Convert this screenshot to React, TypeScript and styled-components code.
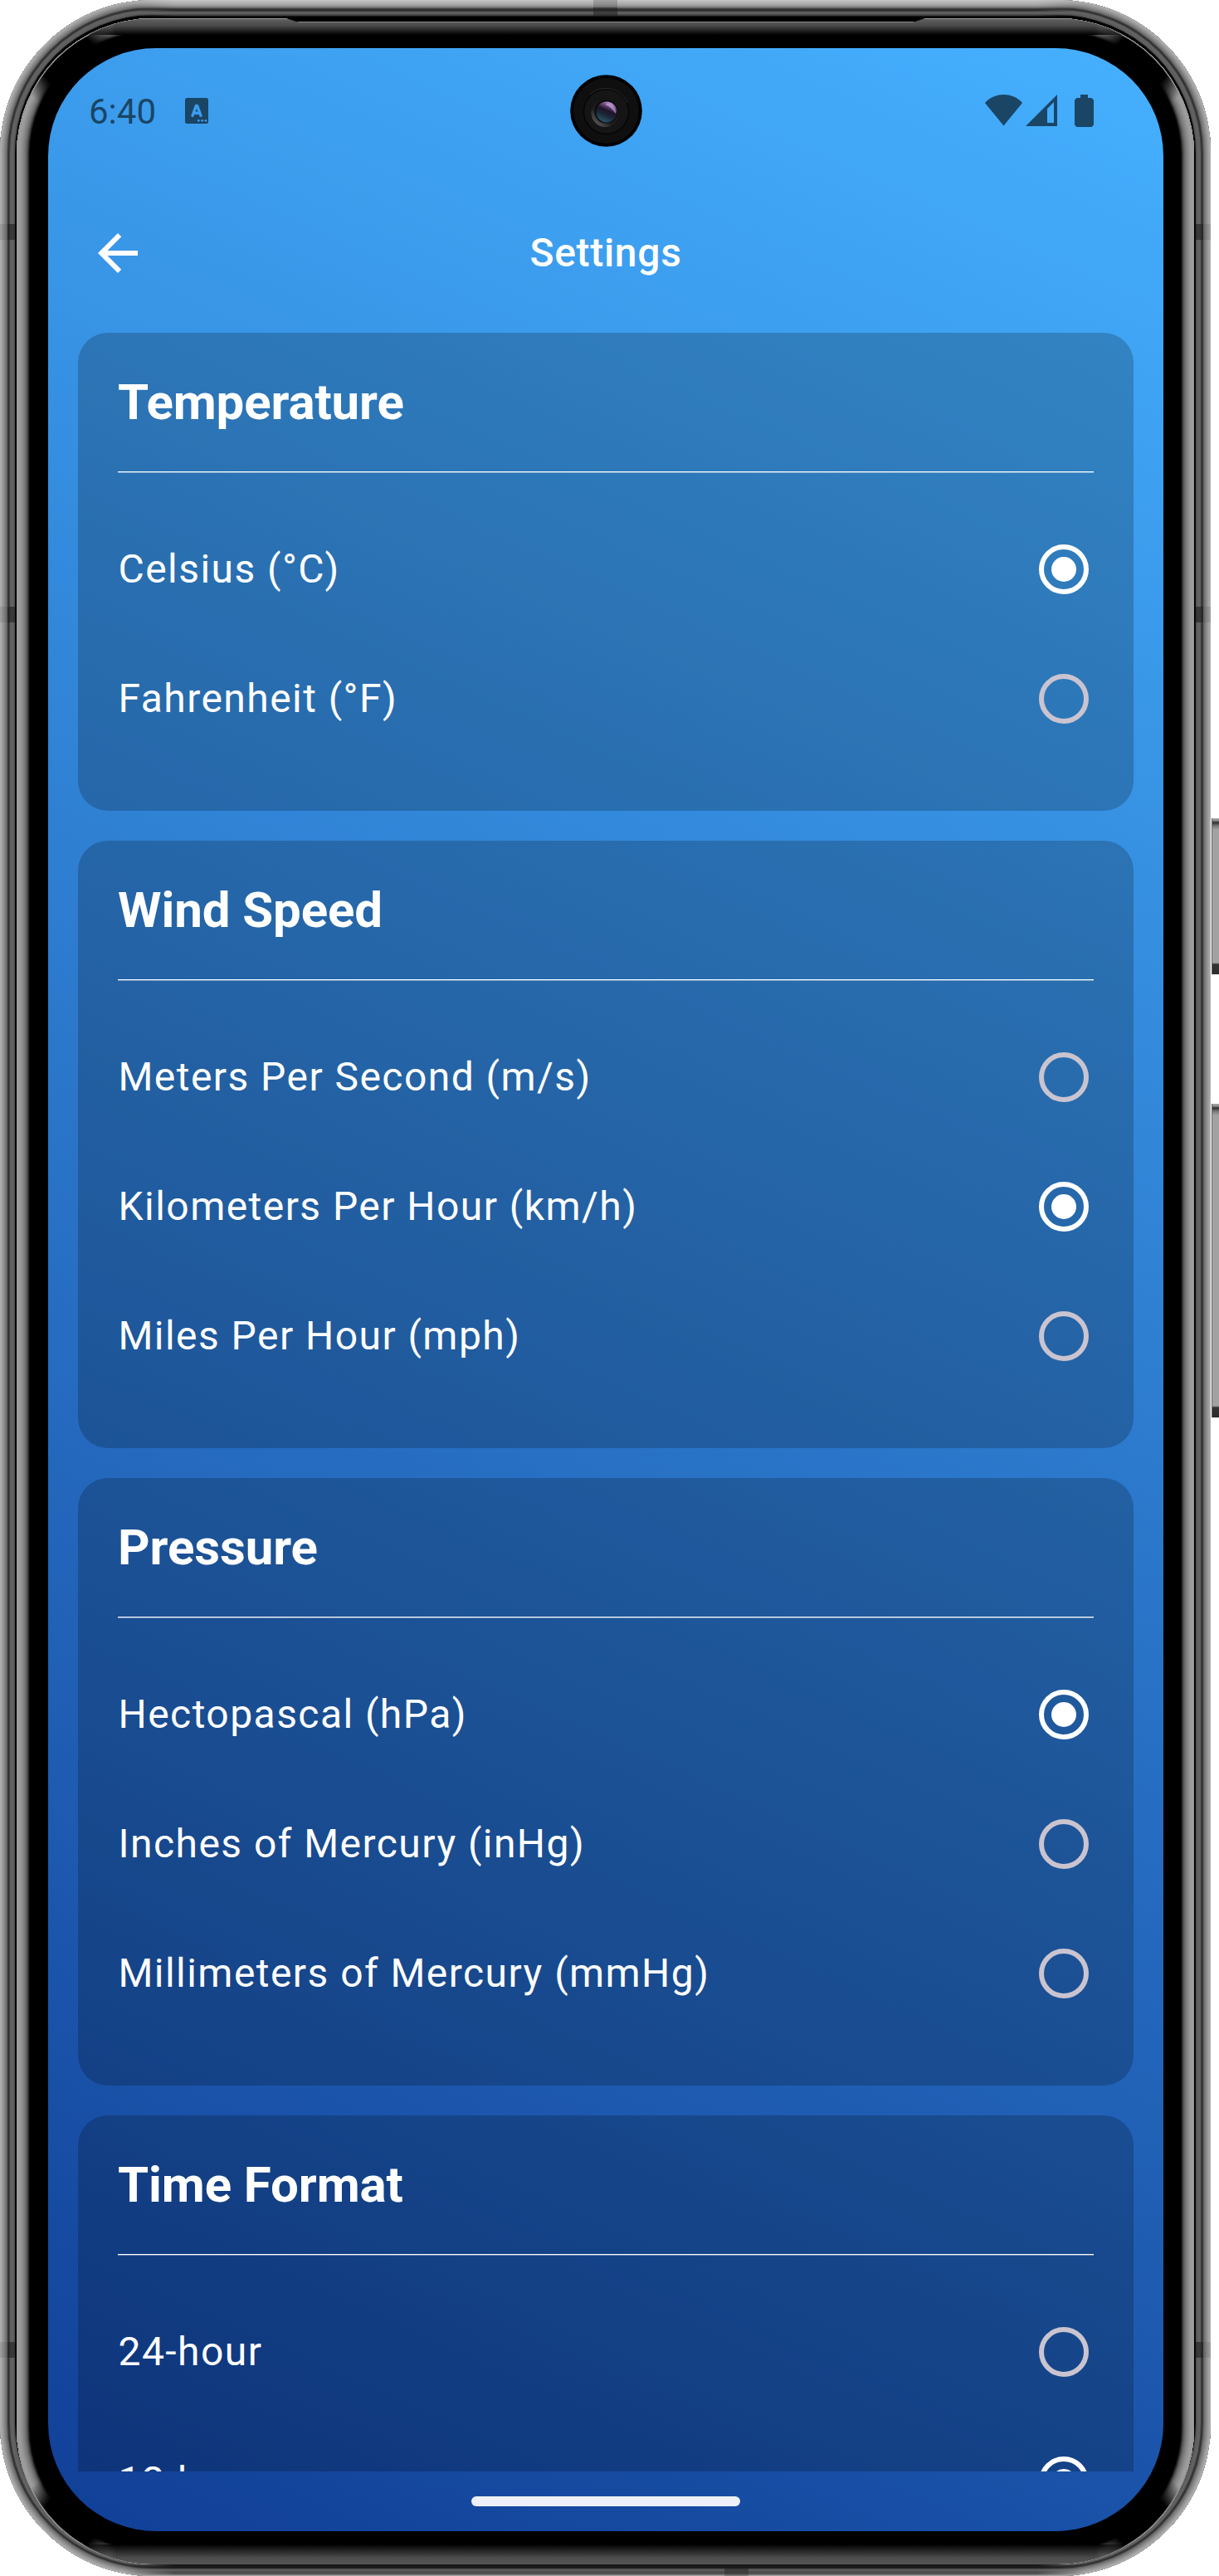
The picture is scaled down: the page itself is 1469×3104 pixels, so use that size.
import React from "react";
import styled, { createGlobalStyle } from "styled-components";

const Global = createGlobalStyle`
  html, body { margin: 0; padding: 0; background: #fff; }
  * { box-sizing: border-box; }
`;

const g = (v: number) => `rgb(${v}, ${v}, ${v})`;

const rings = (levels: number[]) =>
  levels.map((v, i) => `inset 0 0 0 ${i + 1}px ${g(v)}`).join(", ");

const Stage = styled.main`
  display: flex;
  gap: 1px;
  width: 1469px;
  height: 3104px;
  overflow: hidden;
  font-family: Roboto, "Liberation Sans", sans-serif;
`;

const seamLeft = "linear-gradient(90deg, rgba(60,60,60,.15) 0 9px, rgba(30,30,30,.6) 9px)";
const seamRight = "linear-gradient(270deg, rgba(60,60,60,.15) 0 9px, rgba(30,30,30,.6) 9px)";

/* Metal rim; the ::before brightens the top and bottom edges, the ::after draws the antenna seams. */
const Body = styled.div`
  position: relative;
  flex: none;
  width: 1459px;
  height: 3104px;
  padding: 22px 20px 14px;
  border-radius: 184px;
  background: #000;
  box-shadow: ${rings([176, 168, 160, 152, 144, 134, 124, 112, 100, 60, 50, 62, 96, 98, 98, 96, 92, 80, 10, 0])};

  &::before {
    content: "";
    position: absolute;
    inset: 0 150px;
    background:
      linear-gradient(#c6c6c6 0, #a4a4a4 6px, #777 9px, #303030 11px, #303030 13px, #686868 15px, #555 17px, #333 19px, #000 20px) 0 0 / 100% 22px no-repeat,
      linear-gradient(#1a1a1a 0 4px, #303030 5px, #606060 6px, #555 8px, #484848 10px, #606060 12px, #bbb 14px) 0 100% / 100% 14px no-repeat;
    mask-image: linear-gradient(90deg, transparent, #000 60px, #000 calc(100% - 60px), transparent);
  }

  &::after {
    content: "";
    position: absolute;
    inset: 0;
    background:
      ${seamLeft} 0 270px / 18px 19px no-repeat,
      ${seamRight} 100% 270px / 18px 19px no-repeat,
      ${seamLeft} 0 731px / 18px 19px no-repeat,
      ${seamRight} 100% 731px / 18px 19px no-repeat,
      ${seamLeft} 0 2822px / 18px 19px no-repeat,
      ${seamRight} 100% 2822px / 18px 19px no-repeat,
      linear-gradient(rgba(60,60,60,.25) 0 9px, rgba(30,30,30,.5) 9px) 715px 0 / 29px 20px no-repeat,
      linear-gradient(rgba(30,30,30,.6), rgba(60,60,60,.3)) 873px 100% / 29px 10px no-repeat;
  }
`;

const Bezel = styled.div`
  position: relative;
  width: 1419px;
  height: 3068px;
  padding: 36px 37px 40px 38px;
  border-radius: 164px;
  background: #000;
  box-shadow: ${rings([150, 158, 158, 156, 152, 148, 142, 136, 130, 122, 114, 102, 86, 66, 40, 14])};

  &::before {
    content: "";
    position: absolute;
    inset: 0;
    border-radius: 164px;
    background:
      linear-gradient(#9a9a9a 0 1px, #5f5f5f 1px, #4a4a4a 9px, #222 15px, #000 20px, transparent 20px) 0 0 / 100% 20px no-repeat,
      linear-gradient(0deg, #555 0, #4c4c4c 8px, #222 17px, #000 24px) 0 100% / 100% 24px no-repeat;
    mask-image: linear-gradient(90deg, transparent 70px, #000 120px, #000 calc(100% - 120px), transparent calc(100% - 70px));
  }

  &::after {
    content: "";
    position: absolute;
    inset: 1px;
    border-radius: 163px;
    background:
      radial-gradient(circle at 62px 50px, #000 34px, transparent 62px),
      radial-gradient(circle at calc(100% - 62px) 50px, #000 34px, transparent 62px),
      radial-gradient(circle at 62px calc(100% - 50px), #000 34px, transparent 62px),
      radial-gradient(circle at calc(100% - 62px) calc(100% - 50px), #000 34px, transparent 62px);
  }
`;

const Earpiece = styled.div`
  position: absolute;
  z-index: 1;
  top: -1px;
  left: 322px;
  width: 776px;
  height: 6px;
  background: #000;
  border-bottom: 1px solid #8a8a8a;
  clip-path: polygon(0 0, 100% 0, calc(100% - 18px) 100%, 18px 100%);
`;

const Keys = styled.aside`
  display: flex;
  flex-direction: column;
  gap: 156px;
  padding-top: 986px;
`;

const SideKey = styled.i<{ $length: number }>`
  flex: none;
  width: 9px;
  height: ${(p) => p.$length}px;
  border-left: 1px solid #666;
  background: linear-gradient(#aaa 0, #888 3px, #2c2c2c 5px, #777 9px, #a2a2a2 14px, #a2a2a2 calc(100% - 14px), #333 calc(100% - 12px), #2c2c2c 100%);
`;

const Screen = styled.div`
  position: relative;
  z-index: 1;
  width: 1344px;
  height: 2992px;
  border-radius: 130px;
  overflow: hidden;
  display: flex;
  flex-direction: column;
  color: #fff;
  background: linear-gradient(204.19deg, #45b0ff, #113f97);
`;

const StatusBar = styled.header`
  display: grid;
  grid-template-columns: 1fr 87px 1fr;
  align-items: center;
  flex: none;
  height: 151px;
  padding: 0 84px 0 49px;
  column-gap: 0;
  color: #1a4565;
`;

const StatusStart = styled.div`
  display: flex;
  align-items: center;
  width: 580px;
`;

const Clock = styled.span`
  width: 116px;
  padding-top: 2px;
  font-size: 42px;
  line-height: 50px;
`;

const StatusEnd = styled.div`
  display: flex;
  justify-content: flex-end;
  gap: 4px;
`;

const StatusRow = styled(StatusBar)`
  grid-template-columns: 580px 87px 1fr;
`;

const AppBar = styled.div`
  display: grid;
  grid-template-columns: 72px 1fr 72px;
  align-items: center;
  flex: none;
  height: 192px;
  padding: 0 48px;
`;

const ScreenTitle = styled.h1`
  margin: 0;
  font-size: 48px;
  font-weight: 500;
  line-height: 72px;
  letter-spacing: 0.7px;
  text-align: center;
`;

const List = styled.section`
  flex: 1;
  min-height: 0;
  margin: 0 36px;
  overflow: hidden;
  display: flex;
  flex-direction: column;
  gap: 36px;
`;

const Card = styled.article`
  flex: none;
  padding: 48px 48px 57px;
  border-radius: 36px;
  background: rgba(0, 0, 0, 0.2);
`;

const CardTitle = styled.h2`
  margin: 0;
  height: 119px;
  font-size: 60px;
  font-weight: 700;
  line-height: 72px;
  letter-spacing: -0.1px;
`;

const Divider = styled.div`
  height: 2px;
  margin-bottom: 38px;
  background: linear-gradient(#fff 50%, rgba(255, 255, 255, 0.35) 50%);
`;

const Option = styled.label`
  display: flex;
  align-items: center;
  justify-content: space-between;
  height: 156px;
  padding: 0 6px 0 0.5px;
  font-size: 48px;
  line-height: 72px;
  letter-spacing: 1.45px;
`;

const Radio = styled.span<{ $on: boolean }>`
  display: grid;
  place-items: center;
  width: 60px;
  height: 60px;
  border: 6px solid ${(p) => (p.$on ? "#fff" : "#cac4d0")};
  border-radius: 50%;

  &::after {
    content: "";
    width: 30px;
    height: 30px;
    border-radius: 50%;
    background: ${(p) => (p.$on ? "#fff" : "transparent")};
  }
`;

const NavBar = styled.footer`
  display: flex;
  align-items: center;
  justify-content: center;
  flex: none;
  height: 72px;
`;

const HomePill = styled.div`
  width: 324px;
  height: 12px;
  border-radius: 6px;
  background: #edf0f9;
`;

const groups = [
  { title: "Temperature", options: ["Celsius (°C)", "Fahrenheit (°F)"], selected: 0 },
  {
    title: "Wind Speed",
    options: ["Meters Per Second (m/s)", "Kilometers Per Hour (km/h)", "Miles Per Hour (mph)"],
    selected: 1,
  },
  {
    title: "Pressure",
    options: ["Hectopascal (hPa)", "Inches of Mercury (inHg)", "Millimeters of Mercury (mmHg)"],
    selected: 0,
  },
  { title: "Time Format", options: ["24-hour", "12-hour"], selected: 1 },
];

const KeyboardIcon = () => (
  <svg width="28" height="31" viewBox="0 0 28 31">
    <rect width="28" height="31" rx="2.5" fill="#1a4565" />
    <path d="M9 21.3 L13.4 9.4 H14.6 L19 21.3 M10.8 18.3 H17.2" fill="none" stroke="#3c9cec" strokeWidth="3.4" strokeLinecap="round" strokeLinejoin="round" />
    <g fill="#3c9cec">
      <circle cx="16.3" cy="27.3" r="1.4" />
      <circle cx="20.6" cy="27.3" r="1.4" />
      <circle cx="24.9" cy="27.3" r="1.4" />
    </g>
  </svg>
);

const WifiIcon = () => (
  <svg width="45" height="39" viewBox="0 0 45 39">
    <path d="M0 10 C12 -3.2 33 -3.2 45 10 L22.5 37.5 Z" fill="#1a4565" />
  </svg>
);

const SignalIcon = () => (
  <svg width="38" height="39" viewBox="0 0 38 39">
    <path fillRule="evenodd" d="M38 0 V38 H0 Z M34 9 L26 17 V34 H34 Z" fill="#1a4565" />
  </svg>
);

const BatteryIcon = () => (
  <svg width="40" height="39" viewBox="-17 0 40 39">
    <path d="M7 0 H16 V4 H20.5 L23 6.5 V36.5 L20.5 39 H2.5 L0 36.5 V6.5 L2.5 4 H7 Z" fill="#1a4565" />
  </svg>
);

const BackIcon = () => (
  <svg width="72" height="72" viewBox="0 0 24 24" fill="#fff">
    <path d="M20 11H7.83l5.59-5.59L12 4l-8 8 8 8 1.41-1.41L7.83 13H20v-2z" />
  </svg>
);

const Lens = () => (
  <svg width="87" height="87" viewBox="0 0 87 87">
    <defs>
      <linearGradient id="rim" x1="0" y1="1" x2="0.8" y2="0.1">
        <stop offset="0.1" stopColor="#626262" />
        <stop offset="0.45" stopColor="#1c1c1c" />
        <stop offset="1" stopColor="#151515" />
      </linearGradient>
      <linearGradient id="glass" x1="0.75" y1="0.05" x2="0.35" y2="1">
        <stop offset="0" stopColor="#c49ad8" />
        <stop offset="0.2" stopColor="#6c4c80" />
        <stop offset="0.42" stopColor="#1f1428" />
        <stop offset="0.65" stopColor="#1b2738" />
        <stop offset="1" stopColor="#2a5a70" />
      </linearGradient>
    </defs>
    <circle cx="43.5" cy="43.5" r="43.3" fill="#000" />
    <circle cx="43.5" cy="43.5" r="39.5" fill="#0f0f0f" />
    <circle cx="43.5" cy="44.5" r="27" fill="#151515" stroke="#050505" strokeWidth="1.5" />
    <path d="M24 24 A28 28 0 0 1 69 34" fill="none" stroke="#2c2c2c" strokeWidth="1" />
    <circle cx="42.5" cy="46" r="17" fill="url(#rim)" />
    <circle cx="43.5" cy="44.5" r="14" fill="#0b0b0b" />
    <circle cx="44" cy="45" r="12.5" fill="url(#glass)" />
    <path d="M45 34.5 A11.5 11.5 0 0 1 55 47 Q50 39 42 36 Z" fill="#d9b7ea" opacity="0.55" />
  </svg>
);

export default function App() {
  return (
    <Stage>
      <Global />
      <Body>
        <Bezel>
          <Earpiece />
          <Screen>
            <StatusRow>
              <StatusStart>
                <Clock>6:40</Clock>
                <KeyboardIcon />
              </StatusStart>
              <Lens />
              <StatusEnd>
                <WifiIcon />
                <SignalIcon />
                <BatteryIcon />
              </StatusEnd>
            </StatusRow>
            <AppBar>
              <BackIcon />
              <ScreenTitle>Settings</ScreenTitle>
            </AppBar>
            <List>
              {groups.map((group) => (
                <Card key={group.title}>
                  <CardTitle>{group.title}</CardTitle>
                  <Divider />
                  {group.options.map((option, i) => (
                    <Option key={option}>
                      {option}
                      <Radio $on={i === group.selected} />
                    </Option>
                  ))}
                </Card>
              ))}
            </List>
            <NavBar>
              <HomePill />
            </NavBar>
          </Screen>
        </Bezel>
      </Body>
      <Keys>
        <SideKey $length={188} />
        <SideKey $length={378} />
      </Keys>
    </Stage>
  );
}
